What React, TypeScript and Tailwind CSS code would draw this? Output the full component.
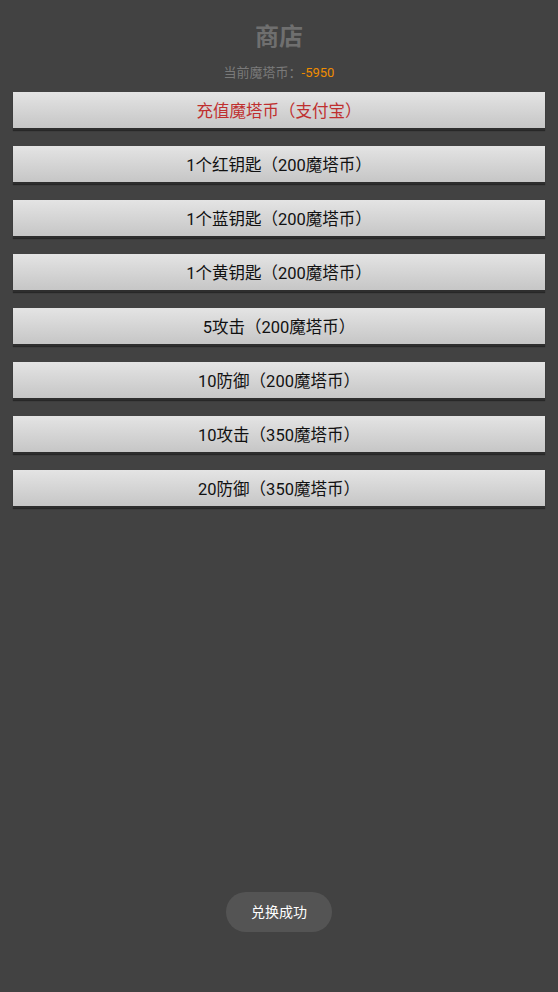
const items = [
  "1个红钥匙（200魔塔币）",
  "1个蓝钥匙（200魔塔币）",
  "1个黄钥匙（200魔塔币）",
  "5攻击（200魔塔币）",
  "10防御（200魔塔币）",
  "10攻击（350魔塔币）",
  "20防御（350魔塔币）",
]

function ShopButton({ label, red }: { label: string; red?: boolean }) {
  return (
    <button
      className={`h-[38px] w-full pt-[5px] bg-gradient-to-b from-[#e4e4e4] to-[#c6c6c6] text-[16.5px] border-b-2 border-[#2e2e2e] shadow-[0_1px_1px_rgba(0,0,0,0.4)] ${red ? "text-[#bf2f2f]" : "text-[#111]"}`}
    >
      {label}
    </button>
  )
}

export default function App() {
  const coins = -5950

  return (
    <div
      className="relative h-[992px] w-[558px] bg-[#424242] flex flex-col"
      style={{ fontFamily: 'Roboto, "Noto Sans CJK SC", sans-serif' }}
    >
      <div className="pt-[20px] text-center text-[24px] font-bold leading-[34px] text-[#6f6f6f]">商店</div>
      <div className="mt-[10px] text-center text-[13px] leading-[17px] text-[#7a7a7a]">
        当前魔塔币：<span className="text-[#f08c00]">{coins}</span>
      </div>
      <div className="mt-[11px] flex flex-col gap-[16px] px-[13px]">
        <ShopButton label="充值魔塔币（支付宝）" red />
        {items.map((item, i) => (
          <ShopButton key={i} label={item} />
        ))}
      </div>
      <div className="absolute left-[226px] top-[892px] flex h-[40px] w-[106px] items-center justify-center rounded-full bg-[#545454] text-[14px] text-white">
        兑换成功
      </div>
    </div>
  )
}
